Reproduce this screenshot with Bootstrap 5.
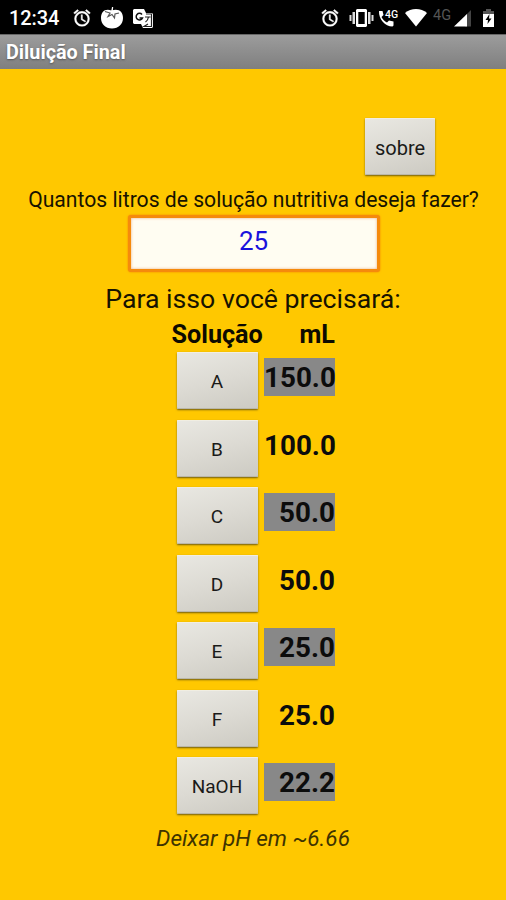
<!DOCTYPE html>
<html lang="pt-BR">
<head>
<meta charset="utf-8">
<meta name="viewport" content="width=device-width, initial-scale=1">
<title>Diluição Final</title>
<link href="https://cdn.jsdelivr.net/npm/bootstrap@5.3.0/dist/css/bootstrap.min.css" rel="stylesheet">
<style>
body{font-family:Roboto,"Liberation Sans",sans-serif;background:#ffc800;color:#171300;min-height:900px;line-height:1.172;overflow:hidden}
.status{height:34px;background:#000;color:#fff;padding:2px 11px 0 9px}
.status svg{display:block;flex:none}
.clock{font-size:20px;font-weight:500;width:63px;letter-spacing:-.1px;padding-top:1px}
.titlebar{height:35px;background:linear-gradient(#9c9c9c,#7f7f7f);border-top:1px solid #666;color:#fff;font-size:19.8px;font-weight:700;padding:1px 6px 0;text-shadow:0 1px 2px #555}
.key{background:linear-gradient(165deg,#e9e8e2,#dcdad3 50%,#cccac2);border:0;border-radius:1px;box-shadow:inset 0 1px #f1eee2,inset 0 -1px #bab7aa,0 1px 2px #705c10;color:#1a1a18;padding:2px 0 0;text-align:center;height:57px;line-height:1}
.about{width:70px;font-size:20px;margin:49px 71px 0 0}
.question{font-size:21.15px;height:25px;margin-top:13px;white-space:nowrap;padding-left:1px}
.litres{width:252px;height:57px;border:3px solid #f58a0c;border-radius:3px;background:#fffdf2;color:#1a12dc;font-size:26px;text-align:center;padding:0 0 6px;margin:2px 0 0 1px;box-shadow:0 0 2px #f47c00,inset 0 0 3px #e9ae84;outline:0}
.need{font-size:26.7px;margin-top:12px;height:36px;white-space:nowrap}
.table-box{width:164px}
.heads{height:32px;font-size:25.2px;font-weight:700;color:#0d0b00;margin:0 0 0 .5px}
.line{height:67.5px}
.line .key{width:81px;font-size:19px;margin-left:5.5px}
.amount{width:71px;height:38px;margin-top:6px;font-size:27.8px;font-weight:700;color:#0c0c0c;text-align:right;line-height:40px;white-space:nowrap}
.line:nth-child(even) .amount{background:#888}
.hint{font-size:22.5px;font-style:italic;color:#3e3300;white-space:nowrap}
</style>
</head>
<body>
<header>
<div class="status d-flex align-items-center">
  <span class="clock">12:34</span>
  <svg width="20" height="20" viewBox="0 0 24 24" fill="#fff" stroke="#fff" stroke-width=".5"><path d="M22 5.7l-4.6-3.9-1.3 1.5 4.6 3.9L22 5.7zM7.9 3.4L6.6 1.9 2 5.7l1.3 1.5 4.6-3.8zM12.5 8H11v6l4.7 2.9.8-1.3-4-2.3V8zM12 4a9 9 0 1 0 0 18 9 9 0 0 0 0-18zm0 16a7 7 0 1 1 0-14 7 7 0 0 1 0 14z"/></svg>
  <svg class="ms-2" width="24" height="24" viewBox="0 0 24 24"><path fill="#fff" d="M11.500 4.500C5 2 1 6 1 12c0 6 4.500 10.500 11 10.500S23 18 23 12c0-6-4-10-11.500-7.500z"/><path d="M5 5.500 10 7 8 10.500 12 8.500 14.500 12 15 8l4-1" fill="none" stroke="#555" stroke-width="1.200"/><path d="M11 6l1-5h1.200l-.5 5z" fill="#fff"/></svg>
  <svg class="ms-2" width="22" height="21" viewBox="0 0 22 21"><path d="M2 1h10l2 4h6l1 1v13l-1 1h-9l-2-4H2l-1-1V2z" fill="#fff"/><path d="M14 6h5.500v12.500H12L16 16M13 9h5.500M16.500 9c-.5 3-1.500 4-3 5" fill="none" stroke="#222" stroke-width="1.200"/><path d="M10 6.500A3.300 3.300 0 1 0 10.500 10H7.500" fill="none" stroke="#111" stroke-width="1.500"/></svg>
  <svg class="ms-auto" width="20" height="20" viewBox="0 0 24 24" fill="#fff" stroke="#fff" stroke-width=".5"><path d="M22 5.700l-4.600-3.900-1.300 1.500 4.600 3.900L22 5.700zM7.900 3.400L6.600 1.900 2 5.700l1.300 1.500 4.600-3.800zM12.500 8H11v6l4.700 2.900.8-1.300-4-2.300V8zM12 4a9 9 0 1 0 0 18 9 9 0 0 0 0-18zm0 16a7 7 0 1 1 0-14 7 7 0 0 1 0 14z"/></svg>
  <svg style="margin-left:9px" width="25" height="20" viewBox="0 0 25 20" fill="#fff"><path fill-rule="evenodd" d="M8 1h9l1 1v16l-1 1H8l-1-1V2zM9.300 4v12h6.400V4z"/><path fill="#ddd" d="M3.500 4H6v12H3.500zM19 4h2.500v12H19zM.5 7h2v6h-2zM22.500 7h2v6h-2z"/></svg>
  <svg style="margin-left:4px" width="22" height="20" viewBox="0 0 22 20"><path d="M1 3h3.500l1 4-2 2c1.300 2.700 3 4.400 5.500 5.500l2-2 4.500 1v4l-1 1C7 18.500.5 11 1 3z" fill="#fff"/><text x="7" y="9.500" font-family="Roboto" font-size="10.500" font-weight="500" fill="#fff">4G</text></svg>
  <svg style="margin-left:4px" width="24" height="20" viewBox="0 0 24 20"><path d="M1 5C7-.2 17-.2 23 5L12 18.500z" fill="#fff"/></svg>
  <svg style="margin-left:5px" width="40" height="22" viewBox="0 0 40 22"><text x="0" y="13" font-family="Roboto" font-size="14.500" fill="#555">4G</text><path d="M38 3v16.500h-6V9z" fill="#444"/><path d="M21 19.500 34 7v12.500z" fill="#fff"/></svg>
  <svg style="margin-left:9px" width="13" height="20" viewBox="0 0 13 20"><path d="M1 6V3h3V1h5v2h3v3z" fill="#555"/><path d="M1 6h11v13H1z" fill="#fff"/><path d="M7.500 6 3.500 12H6l-.5 4L9.500 10.500H7z" fill="#000"/></svg>
</div>
<h1 class="titlebar d-flex align-items-center m-0">Diluição Final</h1>
</header>
<main class="d-flex flex-column align-items-center">
  <button class="key about align-self-end" type="button">sobre</button>
  <label class="question" for="litres">Quantos litros de solução nutritiva deseja fazer?</label>
  <input class="litres" id="litres" type="text" value="25">
  <div class="need">Para isso você precisará:</div>
  <section class="table-box">
    <div class="heads d-flex justify-content-between"><span>Solução</span><span>mL</span></div>
    <div class="line d-flex justify-content-between align-items-start"><button class="key" type="button">A</button><div class="amount">150.0</div></div>
    <div class="line d-flex justify-content-between align-items-start"><button class="key" type="button">B</button><div class="amount">100.0</div></div>
    <div class="line d-flex justify-content-between align-items-start"><button class="key" type="button">C</button><div class="amount">50.0</div></div>
    <div class="line d-flex justify-content-between align-items-start"><button class="key" type="button">D</button><div class="amount">50.0</div></div>
    <div class="line d-flex justify-content-between align-items-start"><button class="key" type="button">E</button><div class="amount">25.0</div></div>
    <div class="line d-flex justify-content-between align-items-start"><button class="key" type="button">F</button><div class="amount">25.0</div></div>
    <div class="line d-flex justify-content-between align-items-start"><button class="key" type="button">NaOH</button><div class="amount">22.2</div></div>
  </section>
  <div class="hint">Deixar pH em ~6.66</div>
</main>
<script src="https://cdn.jsdelivr.net/npm/bootstrap@5.3.0/dist/js/bootstrap.bundle.min.js"></script>
</body>
</html>
